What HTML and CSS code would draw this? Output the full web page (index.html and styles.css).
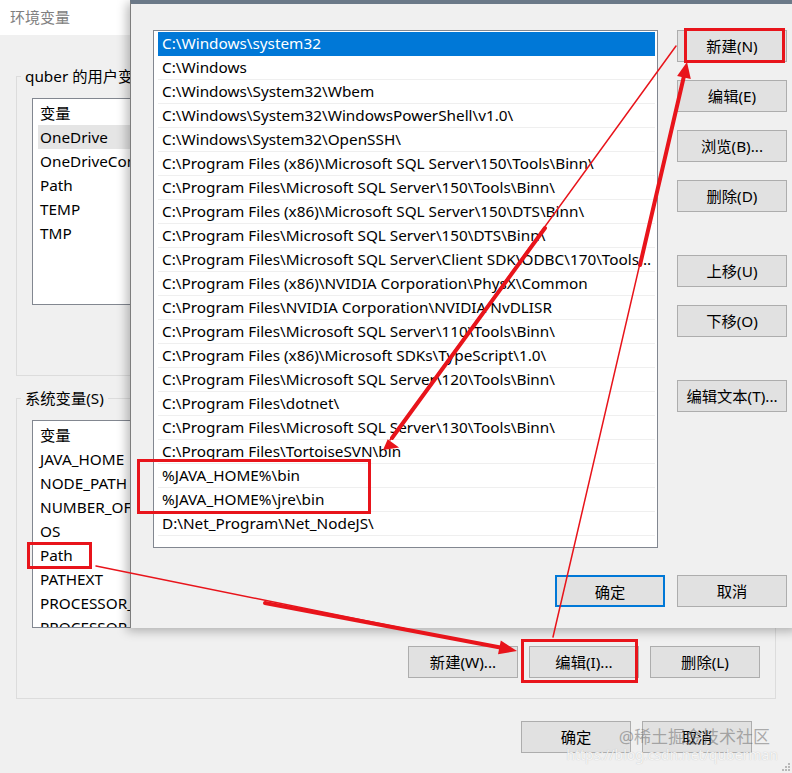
FILE: index.html
```html
<!DOCTYPE html>
<html lang="zh-CN">
<head>
<meta charset="utf-8">
<title>环境变量</title>
<link rel="stylesheet" href="styles.css">
</head>
<body>
<div class="desktop">
  <div class="env-window">
    <div class="env-title">环境变量</div>
    <div class="env-body">
      <section class="group">
        <div class="group-label">quber 的用户变量(U)</div>
        <div class="var-list">
          <div class="var-row var-head">变量</div>
          <div class="var-row hovered">OneDrive</div>
          <div class="var-row">OneDriveConsumer</div>
          <div class="var-row">Path</div>
          <div class="var-row">TEMP</div>
          <div class="var-row">TMP</div>
        </div>
        <div class="btn-row">
          <button class="btn">新建(N)...</button>
          <button class="btn">编辑(E)...</button>
          <button class="btn">删除(D)</button>
        </div>
      </section>
      <section class="group group-sys">
        <div class="group-label">系统变量(S)</div>
        <div class="var-list var-list-sys">
          <div class="var-row var-head">变量</div>
          <div class="var-row">JAVA_HOME</div>
          <div class="var-row">NODE_PATH</div>
          <div class="var-row">NUMBER_OF_PROCESSORS</div>
          <div class="var-row">OS</div>
          <div class="var-row">Path</div>
          <div class="var-row">PATHEXT</div>
          <div class="var-row">PROCESSOR_ARCHITECTURE</div>
          <div class="var-row">PROCESSOR_IDENTIFIER</div>
        </div>
        <div class="btn-row">
          <button class="btn">新建(W)...</button>
          <button class="btn">编辑(I)...</button>
          <button class="btn">删除(L)</button>
        </div>
      </section>
      <div class="footer-row">
        <button class="btn">确定</button>
        <button class="btn">取消</button>
      </div>
    </div>
  </div>

  <div class="edit-dialog">
    <div class="dlg-main">
      <div class="path-list">
        <div class="path-row selected">C:\Windows\system32</div>
        <div class="path-row">C:\Windows</div>
        <div class="path-row">C:\Windows\System32\Wbem</div>
        <div class="path-row">C:\Windows\System32\WindowsPowerShell\v1.0\</div>
        <div class="path-row">C:\Windows\System32\OpenSSH\</div>
        <div class="path-row">C:\Program Files (x86)\Microsoft SQL Server\150\Tools\Binn\</div>
        <div class="path-row">C:\Program Files\Microsoft SQL Server\150\Tools\Binn\</div>
        <div class="path-row">C:\Program Files (x86)\Microsoft SQL Server\150\DTS\Binn\</div>
        <div class="path-row">C:\Program Files\Microsoft SQL Server\150\DTS\Binn\</div>
        <div class="path-row">C:\Program Files\Microsoft SQL Server\Client SDK\ODBC\170\Tools\Binn\</div>
        <div class="path-row">C:\Program Files (x86)\NVIDIA Corporation\PhysX\Common</div>
        <div class="path-row">C:\Program Files\NVIDIA Corporation\NVIDIA NvDLISR</div>
        <div class="path-row">C:\Program Files\Microsoft SQL Server\110\Tools\Binn\</div>
        <div class="path-row">C:\Program Files (x86)\Microsoft SDKs\TypeScript\1.0\</div>
        <div class="path-row">C:\Program Files\Microsoft SQL Server\120\Tools\Binn\</div>
        <div class="path-row">C:\Program Files\dotnet\</div>
        <div class="path-row">C:\Program Files\Microsoft SQL Server\130\Tools\Binn\</div>
        <div class="path-row">C:\Program Files\TortoiseSVN\bin</div>
        <div class="path-row">%JAVA_HOME%\bin</div>
        <div class="path-row">%JAVA_HOME%\jre\bin</div>
        <div class="path-row">D:\Net_Program\Net_NodeJS\</div>
      </div>
      <div class="side-buttons">
        <div class="btn-group">
          <button class="btn">新建(N)</button>
          <button class="btn">编辑(E)</button>
          <button class="btn">浏览(B)...</button>
          <button class="btn">删除(D)</button>
        </div>
        <div class="btn-group">
          <button class="btn">上移(U)</button>
          <button class="btn">下移(O)</button>
        </div>
        <div class="btn-group">
          <button class="btn">编辑文本(T)...</button>
        </div>
      </div>
    </div>
    <div class="dlg-footer">
      <button class="btn btn-default">确定</button>
      <button class="btn">取消</button>
    </div>
  </div>

  <svg class="annotations" width="792" height="773" viewBox="0 0 792 773">
    <g fill="none" stroke="#e8141b" stroke-width="3">
      <rect x="685.5" y="29.5" width="98" height="32"/>
      <rect x="138.5" y="460.5" width="231" height="52"/>
      <rect x="28.5" y="543.5" width="62" height="24"/>
      <rect x="522.5" y="640.5" width="114" height="41"/>
    </g>
    <g stroke="#e8141b" stroke-linecap="round">
      <line x1="96" y1="566" x2="505" y2="649" stroke-width="1.5"/>
      <line x1="265" y1="603" x2="503" y2="648" stroke-width="4"/>
      <line x1="553" y1="637" x2="685" y2="70" stroke-width="1.5"/>
      <line x1="640" y1="265" x2="684" y2="76" stroke-width="4"/>
      <line x1="676" y1="46" x2="390" y2="440" stroke-width="1.5"/>
      <line x1="545" y1="228" x2="392" y2="438" stroke-width="4"/>
    </g>
    <g fill="#e8141b">
      <polygon points="517,651 498,654.3 500.8,640.5"/>
      <polygon points="687,62 690.8,79 677.1,75.9"/>
      <polygon points="383,450 399.1,447.4 387.7,439.3"/>
    </g>
  </svg>

  <div class="watermark">
    <div class="wm-brand">@稀土掘金技术社区</div>
    <div class="wm-url">https://blog.csdn.net/quberman</div>
  </div>
  <svg class="grip" width="10" height="10" viewBox="0 0 10 10">
    <g fill="#b8b8b8">
      <rect x="7" y="1" width="2" height="2"/>
      <rect x="4" y="4" width="2" height="2"/>
      <rect x="7" y="4" width="2" height="2"/>
      <rect x="1" y="7" width="2" height="2"/>
      <rect x="4" y="7" width="2" height="2"/>
      <rect x="7" y="7" width="2" height="2"/>
    </g>
  </svg>
</div>
</body>
</html>
```

FILE: styles.css
```css
* { box-sizing: border-box; }
html, body { margin: 0; padding: 0; }
body {
  width: 792px;
  height: 773px;
  overflow: hidden;
  background: #f0f0f0;
  font-family: "Noto Sans", "Noto Sans CJK SC", sans-serif;
  font-size: 15.3px;
  color: #000;
}
.desktop {
  position: relative;
  width: 792px;
  height: 773px;
  overflow: hidden;
}

/* back window */
.env-window {
  width: 792px;
  height: 773px;
  background: #f0f0f0;
}
.env-title {
  height: 35px;
  background: #fff;
  color: #808080;
  font-size: 15px;
  line-height: 35px;
  padding-left: 10px;
}
.env-body { padding-top: 41px; }
.group {
  border: 1px solid #dcdcdc;
  margin: 0 16px;
  padding: 0 15px 20px 15px;
}
.group-sys { margin-top: 22px; }
.group-label {
  width: max-content;
  margin: -12px 0 0 -11px;
  padding: 0 4px;
  line-height: 22px;
  background: #f0f0f0;
}
.var-list {
  margin-top: 11px;
  height: 207px;
  border: 1px solid #828790;
  background: #fff;
  padding: 2px 5px 0 5px;
  overflow: hidden;
}
.var-list-sys { height: 208px; }
.var-row {
  height: 24px;
  line-height: 24px;
  padding-left: 2px;
  white-space: nowrap;
}
.hovered { background: #e5e5e5; }
.btn-row {
  margin-top: 18px;
  display: flex;
  justify-content: flex-end;
  gap: 11px;
}
.footer-row {
  margin-top: 22px;
  display: flex;
  justify-content: flex-end;
  gap: 11px;
  padding-right: 40px;
}
.btn {
  width: 110px;
  height: 32px;
  padding: 0;
  background: #e1e1e1;
  border: 1px solid #adadad;
  font-family: inherit;
  font-size: 15.3px;
  color: #000;
  line-height: 30px;
  text-align: center;
}
.btn-default { border: 2px solid #0078d7; }

/* edit dialog */
.edit-dialog {
  position: absolute;
  left: 130px;
  top: 0;
  width: 670px;
  height: 628px;
  background: #f0f0f0;
  border-top: 4px solid #6b7988;
  border-left: 1px solid #7d7d7d;
  box-shadow: -3px 3px 10px rgba(0, 0, 0, 0.28);
  padding: 26px 0 0 22px;
}
.dlg-main {
  display: flex;
  gap: 19px;
  align-items: flex-start;
}
.path-list {
  width: 505px;
  height: 518px;
  border: 1px solid #828790;
  background: #fff;
  padding: 1px 2px 0 4px;
  overflow: hidden;
}
.path-row {
  height: 24px;
  line-height: 23px;
  padding: 0 3px 0 4px;
  border-bottom: 1px solid #efefef;
  white-space: nowrap;
  overflow: hidden;
  text-overflow: ellipsis;
}
.path-row.selected {
  background: #0078d7;
  color: #fff;
  border-bottom-color: #0078d7;
}
.side-buttons {
  display: flex;
  flex-direction: column;
  gap: 43px;
}
.btn-group {
  display: flex;
  flex-direction: column;
  gap: 18px;
}
.dlg-footer {
  width: 634px;
  margin-top: 27px;
  display: flex;
  justify-content: flex-end;
  gap: 12px;
}

/* overlays */
.annotations {
  position: absolute;
  left: 0;
  top: 0;
  pointer-events: none;
}
.watermark {
  position: absolute;
  right: 14px;
  bottom: 10px;
  text-align: right;
  pointer-events: none;
}
.wm-brand {
  font-size: 17px;
  line-height: 20px;
  color: rgba(110, 110, 110, 0.55);
  padding-right: 8px;
}
.wm-url {
  font-size: 14px;
  line-height: 16px;
  color: rgba(255, 255, 255, 0.85);
  text-shadow: 0 0 1px rgba(150, 150, 150, 0.6);
}
.grip {
  position: absolute;
  right: 1px;
  bottom: 1px;
}
```
